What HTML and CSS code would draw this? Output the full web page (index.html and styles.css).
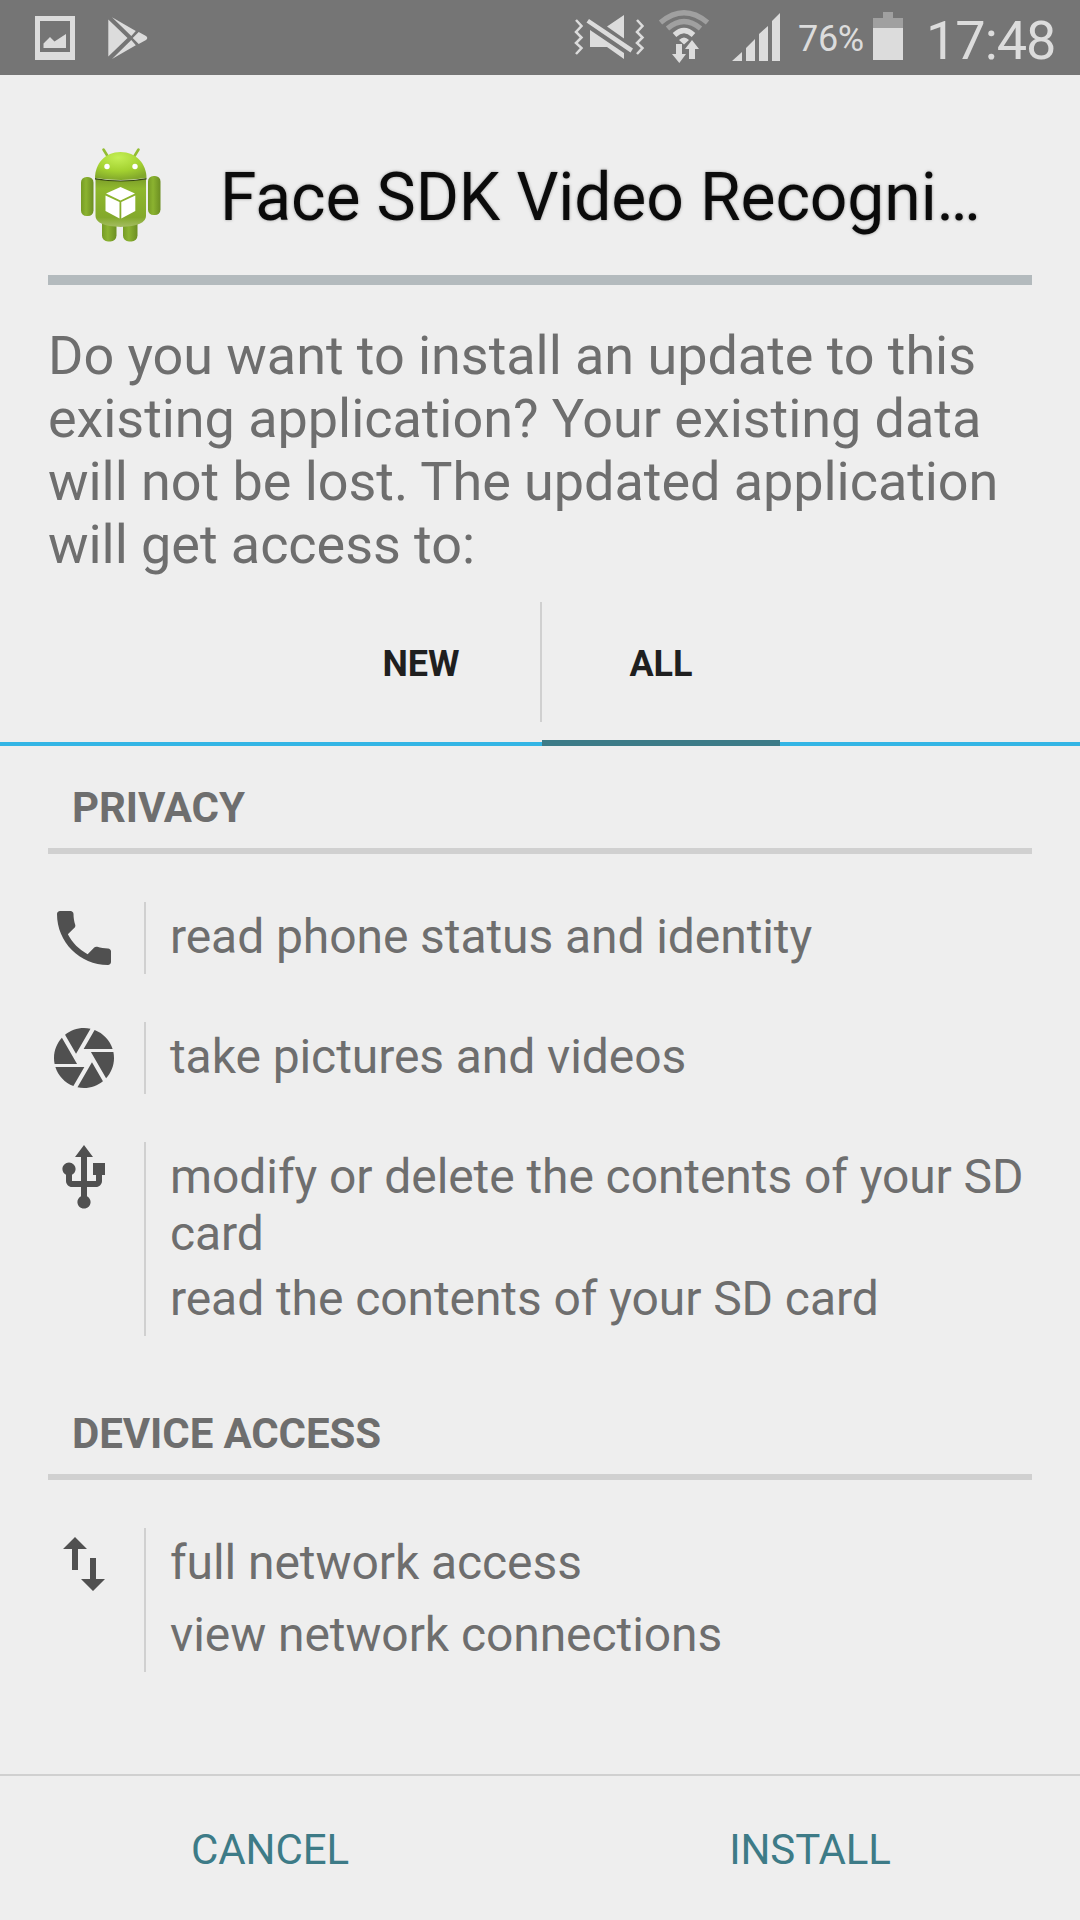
FILE: index.html
```
<!DOCTYPE html>
<html lang="en">
<head>
<meta charset="utf-8">
<title>Package installer</title>
<link rel="stylesheet" href="styles.css">
</head>
<body>
<div class="screen">
  <header class="status">
    <svg class="status-left" width="180" height="75" viewBox="0 0 180 75" fill="#dcdcdc">
      <path fill-rule="evenodd" d="M35 16h40v44H35zM40 21v31h30V21z"/>
      <path d="M43.500 48v-4.500l6.500-6.500 4.500 4.500L66 34v14z"/>
      <path d="M108.300 19.500 127.500 38 108.300 56.500zM112 17.200 135.800 31 131.300 36zM112 59 135.800 45.200 131.300 40zM138.700 32 146 36q2.500 2 0 4l-7.300 4-6-6z"/>
    </svg>
    <div class="status-right">
      <svg width="225" height="75" viewBox="560 0 225 75" fill="#dcdcdc">
        <path d="M576 20l5.500 6-5.500 6 5.500 5.500-5.500 5.500 5.500 5-5.500 6M637 20l5.500 6-5.500 6 5.500 5.500-5.500 5.500 5.500 5-5.500 6" fill="none" stroke="#dcdcdc" stroke-width="2.500"/>
        <path d="M624 15v23.500L607 26.500zM590 30l34 23v6l-17-12h-17zM589 19l44 29.500-2.500 4L586.500 22.500z"/>
        <g fill="none" stroke-width="5.200">
          <path d="M660.500 22.500Q684 3 707.500 22.500" stroke="#a0a0a0"/>
          <path d="M667.500 28.500Q684 14.500 700.500 28.500" stroke="#a0a0a0"/>
          <path d="M674.500 35Q684 26 693.500 35" stroke="#dcdcdc"/>
        </g>
        <path d="M679 40q5-5 10 0l-5 4.500zM676 44h6v10h4l-6.700 9-7.300-9h4zM689 59V49h-4l7-9 7 9h-4v10z"/>
        <path d="M732 61l10-9v9zM746 61V48l9-9v22zM759 61V34l9-8v35zM772 61V21l8-8v48z"/>
      </svg>
      <span class="percent">76%</span>
      <svg class="battery" width="30" height="75" viewBox="0 0 30 75">
        <path fill="#a0a0a0" d="M10 12h10v6h10v11H0V18h10z"/>
        <path fill="#dcdcdc" d="M0 28h30v32H0z"/>
      </svg>
      <span class="clock">17:48</span>
    </div>
  </header>

  <div class="title">
    <svg class="app-icon" width="144" height="144" viewBox="48 125 144 144">
      <defs>
        <radialGradient id="head" cx=".45" cy=".2" r=".8"><stop offset="0" stop-color="#c4ef55"/><stop offset=".6" stop-color="#a3d130"/><stop offset="1" stop-color="#82a82b"/></radialGradient>
        <linearGradient id="body" x2="0" y2="1"><stop offset="0" stop-color="#7d9f29"/><stop offset=".2" stop-color="#8fb82d"/><stop offset=".8" stop-color="#83a92b"/><stop offset="1" stop-color="#a5bd62"/></linearGradient>
        <linearGradient id="limb"><stop offset="0" stop-color="#769b25"/><stop offset=".4" stop-color="#8bb330"/><stop offset="1" stop-color="#6c8e22"/></linearGradient>
      </defs>
      <path d="M103.500 149.500l4 6.500M138.500 149.500l-4 6.500" stroke="#93bd32" stroke-width="2.600" stroke-linecap="round"/>
      <rect x="102" y="216" width="14.500" height="25.500" rx="6" fill="url(#limb)"/>
      <rect x="123" y="216" width="14.500" height="25.500" rx="6" fill="url(#limb)"/>
      <rect x="81" y="177" width="12.500" height="39" rx="5.500" fill="url(#limb)"/>
      <rect x="148" y="176" width="12.500" height="39" rx="5.500" fill="url(#limb)"/>
      <path d="M95.500 179q25 4 50.500 0v37q0 10-25.300 11-25.200-1-25.200-11z" fill="url(#body)"/>
      <path d="M95 178q25.500 5 51.500 0v1.500q-26 4-51.500 0z" fill="#34470f"/>
      <path d="M95 178c0-14 10-26 25.500-26S146.500 164 146.500 178q-26 4-51.500 0z" fill="url(#head)"/>
      <circle cx="107" cy="166.500" r="2.700" fill="#fff"/><circle cx="135" cy="166.500" r="2.700" fill="#fff"/>
      <path d="M120.500 187l14.500 6.500-14.500 7-14.500-7zM105.500 195.500l14 6.500v16.500l-14-7.500zM135.300 195.500l-14 6.500v16.500l14-7.500z" fill="#fff"/>
    </svg>
    <h1>Face SDK Video Recogni…</h1>
  </div>

  <p class="question">Do you want to install an update to this<br>existing application? Your existing data<br>will not be lost. The updated application<br>will get access to:</p>

  <nav class="tabs">
    <div class="tab">NEW</div>
    <div class="tab-divider"></div>
    <div class="tab selected">ALL</div>
  </nav>

  <main class="permissions">
    <section>
      <h2>PRIVACY</h2>
      <div class="group">
        <svg class="icon" viewBox="0 0 24 24"><path d="M6.620 10.790c1.440 2.830 3.760 5.140 6.590 6.590l2.200-2.200c.27-.27.67-.36 1.020-.24 1.120.37 2.330.57 3.570.57.55 0 1 .45 1 1V20c0 .55-.45 1-1 1-9.390 0-17-7.610-17-17 0-.55.45-1 1-1h3.500c.55 0 1 .45 1 1 0 1.250.2 2.450.57 3.570.11.35.03.74-.25 1.020l-2.200 2.200z"/></svg>
        <div class="lines"><p>read phone status and identity</p></div>
      </div>
      <div class="group">
        <svg class="icon" viewBox="0 0 24 24"><path d="M9.400 10.500l4.770-8.260C13.470 2.090 12.750 2 12 2c-2.400 0-4.600.85-6.320 2.250l3.660 6.350.06-.1zM21.540 9c-.92-2.920-3.150-5.260-6-6.340L11.880 9h9.660zm.26 1h-7.490l.29.5 4.760 8.250C21 16.970 22 14.610 22 12c0-.69-.07-1.350-.2-2zM8.540 12l-3.900-6.750C3.010 7.030 2 9.390 2 12c0 .69.070 1.350.2 2h7.490l-1.150-2zm-6.080 3c.92 2.920 3.150 5.260 6 6.340L12.120 15H2.460zm11.270 0l-3.900 6.760c.7.150 1.420.24 2.170.24 2.400 0 4.600-.85 6.320-2.250l-3.660-6.350-.93 1.600z"/></svg>
        <div class="lines"><p>take pictures and videos</p></div>
      </div>
      <div class="group">
        <svg class="icon" viewBox="0 0 24 24"><path d="M15 7v4h1v2h-3V5h2l-3-4-3 4h2v8H8v-2.070c.7-.37 1.200-1.080 1.200-1.930 0-1.210-.99-2.200-2.200-2.200-1.210 0-2.200.99-2.200 2.200 0 .85.500 1.560 1.200 1.930V13c0 1.110.89 2 2 2h3v3.050c-.71.37-1.200 1.100-1.200 1.950 0 1.220.99 2.200 2.200 2.200 1.210 0 2.200-.98 2.200-2.200 0-.85-.49-1.580-1.200-1.950V15h3c1.110 0 2-.89 2-2v-2h1V7h-4z"/></svg>
        <div class="lines"><p>modify or delete the contents of your SD card</p><p>read the contents of your SD card</p></div>
      </div>
    </section>
    <section>
      <h2>DEVICE ACCESS</h2>
      <div class="group">
        <svg class="icon" viewBox="0 0 24 24"><path d="M16 17.010V10h-2v7.010h-3L15 21l4-3.990h-3zM9 3L5 6.990h3V14h2V6.990h3L9 3z"/></svg>
        <div class="lines"><p>full network access</p><p>view network connections</p></div>
      </div>
    </section>
  </main>

  <footer class="actions">
    <div class="action">CANCEL</div>
    <div class="action">INSTALL</div>
  </footer>
</div>
</body>
</html>
```
FILE: styles.css
```
* { box-sizing: border-box; }
body, h1, h2, p { margin: 0; }
body { background: #eee; font-family: Roboto, sans-serif; color: #6e6e6e; }
svg { display: block; flex: none; }
.screen { width: 1080px; height: 1920px; display: flex; flex-direction: column; overflow: hidden; }
.status { height: 75px; flex: none; background: #757575; color: #dcdcdc; display: flex; justify-content: space-between; }
.status-right { display: flex; align-items: center; padding-right: 26px; }
.percent { font-size: 36px; letter-spacing: -.3px; width: 66px; margin-left: 13px; line-height: 75px; padding-top: 4px; white-space: nowrap; }
.battery { margin-left: 9px; }
.clock { font-size: 54px; letter-spacing: -1px; width: 128px; margin-left: 23px; line-height: 75px; padding-top: 6px; white-space: nowrap; }
.title { height: 210px; flex: none; margin: 0 48px; border-bottom: 10px solid #b3babd; display: flex; padding-top: 50px; }
.title h1 { font-size: 66px; font-weight: 400; letter-spacing: -.12px; line-height: 78px; color: #0b0b0b; margin: 34px 0 0 28px; white-space: nowrap; text-shadow: 0 0 3px #666a; }
.question { font-size: 54px; letter-spacing: -.06px; line-height: 63px; margin: 39px 0 0 48px; white-space: nowrap; }
.tabs { height: 144px; flex: none; margin-top: 26px; padding-left: 2px; display: flex; justify-content: center; border-bottom: 4px solid #33b5e5; }
.tab { width: 238px; height: 144px; font-size: 36px; font-weight: 700; line-height: 124px; text-align: center; color: #1f1f1f; }
.tab.selected { border-bottom: 6px solid #3d7b87; }
.tab-divider { width: 2px; height: 120px; background: #d0d0d0; }
.permissions { flex: 1; padding: 0 48px; display: flex; flex-direction: column; gap: 36px; }
.permissions h2 { height: 108px; padding: 37px 24px 0; border-bottom: 6px solid #d0d0d0; font-size: 42px; letter-spacing: -.1px; line-height: 49px; }
.group { display: flex; margin-top: 48px; }
.icon { width: 72px; height: 72px; fill: #505050; }
.lines { margin-left: 24px; padding-left: 24px; border-left: 2px solid #d0d0d0; flex: 1; }
.lines p { font-size: 48px; letter-spacing: -.08px; line-height: 57px; min-height: 72px; padding: 6px 0 2px; }
.actions { height: 146px; flex: none; border-top: 2px solid #d0d0d0; display: flex; }
.action { flex: 1; text-align: center; font-size: 42px; letter-spacing: -.1px; line-height: 147px; color: #3d7b87; }
```
